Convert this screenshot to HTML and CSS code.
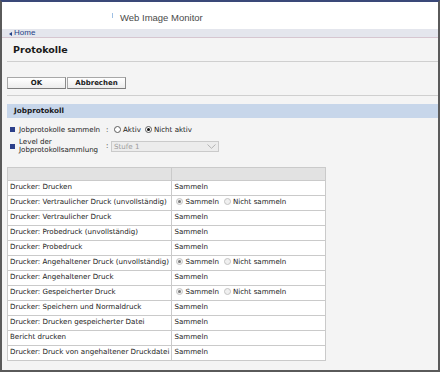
FILE: index.html
```html
<!DOCTYPE html>
<html lang="de">
<head>
<meta charset="utf-8">
<title>Protokolle</title>
<link rel="stylesheet" href="styles.css">
</head>
<body>
<div class="frame">
  <header class="topbar">
    <span class="mark"></span>
    <span class="brand">Web Image Monitor</span>
  </header>
  <nav class="crumb"><span class="tri"></span><span class="home">Home</span></nav>
  <main class="content">
    <h1 class="page-title">Protokolle</h1>
    <div class="rule rule-a"></div>
    <div class="actions">
      <button class="btn">OK</button><button class="btn">Abbrechen</button>
    </div>
    <div class="rule rule-b"></div>
    <h2 class="section">Jobprotokoll</h2>
    <div class="form">
      <span class="bullet"></span>
      <span class="label">Jobprotokolle sammeln</span>
      <span class="colon">:</span>
      <span class="ctrl">
        <span class="radio"></span><span class="opt">Aktiv</span>
        <span class="radio on"></span><span class="opt">Nicht aktiv</span>
      </span>

      <span class="bullet"></span>
      <span class="label">Level der Jobprotokollsammlung</span>
      <span class="colon">:</span>
      <span class="ctrl">
        <span class="select"><span class="sel-text">Stufe 1</span>
          <svg class="chev" width="9" height="5" viewBox="0 0 9 5"><path d="M0.5 0.5 L4.5 4.3 L8.5 0.5" fill="none" stroke="#b4b4b4" stroke-width="1"/></svg>
        </span>
      </span>
    </div>

    <table class="log">
      <thead>
        <tr><th class="c1"></th><th class="c2"></th></tr>
      </thead>
      <tbody>
        <tr><td>Drucker: Drucken</td><td>Sammeln</td></tr>
        <tr><td>Drucker: Vertraulicher Druck (unvollständig)</td><td><span class="tradio on"></span><span class="topt">Sammeln</span><span class="tradio"></span><span class="topt">Nicht sammeln</span></td></tr>
        <tr><td>Drucker: Vertraulicher Druck</td><td>Sammeln</td></tr>
        <tr><td>Drucker: Probedruck (unvollständig)</td><td>Sammeln</td></tr>
        <tr><td>Drucker: Probedruck</td><td>Sammeln</td></tr>
        <tr><td>Drucker: Angehaltener Druck (unvollständig)</td><td><span class="tradio on"></span><span class="topt">Sammeln</span><span class="tradio"></span><span class="topt">Nicht sammeln</span></td></tr>
        <tr><td>Drucker: Angehaltener Druck</td><td>Sammeln</td></tr>
        <tr><td>Drucker: Gespeicherter Druck</td><td><span class="tradio on"></span><span class="topt">Sammeln</span><span class="tradio"></span><span class="topt">Nicht sammeln</span></td></tr>
        <tr><td>Drucker: Speichern und Normaldruck</td><td>Sammeln</td></tr>
        <tr><td>Drucker: Drucken gespeicherter Datei</td><td>Sammeln</td></tr>
        <tr><td>Bericht drucken</td><td>Sammeln</td></tr>
        <tr><td>Drucker: Druck von angehaltener Druckdatei</td><td>Sammeln</td></tr>
      </tbody>
    </table>
  </main>
</div>
</body>
</html>
```
FILE: styles.css
```css
html, body {
  margin: 0;
  padding: 0;
}

body {
  font-family: "DejaVu Sans", Verdana, sans-serif;
  color: #222;
  background: #f4f4f4;
}

.frame {
  width: 440px;
  height: 372px;
  box-sizing: border-box;
  border: 2px solid #5a5a5a;
  border-top: 2px solid #3a4878;
  background: #f4f4f4;
  display: flex;
  flex-direction: column;
  overflow: hidden;
}

/* header */
.topbar {
  height: 27px;
  box-sizing: border-box;
  background: #fff;
  display: flex;
  align-items: flex-start;
  padding: 10px 0 0 110px;
}

.mark {
  width: 1px;
  height: 5px;
  margin-top: 1px;
  background: #9fc0e4;
}

.brand {
  margin-left: 7px;
  font-family: "Liberation Sans", Arial, sans-serif;
  font-size: 9.5px;
  line-height: 11px;
  color: #4a4a4a;
}

/* breadcrumb */
.crumb {
  height: 8px;
  background: #e4e6ed;
  border-bottom: 1px solid #d6c6d0;
  display: flex;
  align-items: center;
  padding-left: 7px;
}

.tri {
  width: 0;
  height: 0;
  border-top: 2px solid transparent;
  border-bottom: 2px solid transparent;
  border-right: 3px solid #1f3f86;
  margin-right: 2px;
  margin-top: 1px;
}

.home {
  font-family: "Liberation Sans", Arial, sans-serif;
  font-size: 8px;
  line-height: 8px;
  color: #1f3f86;
}

/* content */
.content {
  flex: 1;
  padding-left: 5px;
  background: #f4f4f4;
}

.page-title {
  margin: 6px 0 0 6px;
  font-size: 9.5px;
  line-height: 12px;
  font-weight: bold;
  color: #1a1a1a;
}

.rule {
  height: 0;
  border-top: 1px solid #cfcfcf;
}

.rule-a {
  margin-top: 5px;
}

.actions {
  display: flex;
  gap: 1px;
  margin-top: 15px;
}

.btn {
  width: 59px;
  height: 12px;
  box-sizing: border-box;
  padding: 0;
  margin: 0;
  border: 1px solid #a8a8a8;
  border-right-color: #8a8a8a;
  border-bottom-color: #7c7c7c;
  background: linear-gradient(#ffffff, #ececec);
  font-family: "DejaVu Sans", Verdana, sans-serif;
  font-size: 7px;
  line-height: 10px;
  font-weight: bold;
  color: #1a1a1a;
}

.rule-b {
  margin-top: 6px;
}

.section {
  margin: 8px 0 0 0;
  height: 14px;
  background: #c7d6ea;
  padding-left: 7px;
  font-size: 7.3px;
  line-height: 14px;
  font-weight: bold;
  color: #1a1a1a;
}

/* form */
.form {
  display: grid;
  grid-template-columns: 5px 90px 6px auto;
  column-gap: 0;
  row-gap: 3px;
  align-items: center;
  margin-top: 6px;
  padding-left: 3px;
  font-size: 7.1px;
  color: #222;
}

.bullet {
  width: 5px;
  height: 5px;
  background: #2c3f8a;
}

.label {
  padding-left: 4px;
  line-height: 8px;
  width: 86px;
}

.form > .label:nth-child(2) {
  line-height: 11px;
}

.colon {
  padding-left: 1px;
  line-height: 8px;
}

.ctrl {
  display: flex;
  align-items: center;
  line-height: 11px;
}

.radio {
  width: 7px;
  height: 7px;
  box-sizing: border-box;
  border: 1px solid #5c5c5c;
  border-radius: 50%;
  background: #fff;
  margin: 0 2px 0 3px;
  position: relative;
}

.radio + .opt + .radio {
  margin-left: 4px;
}

.radio.on::after {
  content: "";
  position: absolute;
  left: 1px;
  top: 1px;
  width: 3px;
  height: 3px;
  border-radius: 50%;
  background: #111;
}

.select {
  width: 108px;
  height: 11px;
  box-sizing: border-box;
  border: 1px solid #cacaca;
  background: #ececec;
  display: flex;
  align-items: center;
  justify-content: space-between;
  padding: 0 2px 0 2px;
}

.sel-text {
  color: #9c9c9c;
  line-height: 9px;
}

/* table */
.log {
  margin-top: 13px;
  border-collapse: collapse;
  width: 319px;
  background: #fff;
  font-size: 7.1px;
  color: #222;
}

.log th {
  height: 12px;
  padding: 0;
  background: #e2e2e2;
  border: 1px solid #cacaca;
}

.log th.c1 {
  width: 163px;
}

.log td {
  border: 1px solid #cacaca;
  padding: 1px 2px 3px 2px;
  line-height: 10px;
  white-space: nowrap;
}

.tradio {
  display: inline-block;
  vertical-align: middle;
  width: 7px;
  height: 7px;
  box-sizing: border-box;
  border: 1px solid #c4c4c4;
  border-radius: 50%;
  background: #f0f0f0;
  margin: -1px 2px 0 2px;
  position: relative;
}

.tradio.on::after {
  content: "";
  position: absolute;
  left: 1px;
  top: 1px;
  width: 3px;
  height: 3px;
  border-radius: 50%;
  background: #7a7a7a;
}

.topt + .tradio {
  margin-left: 5px;
}
```
